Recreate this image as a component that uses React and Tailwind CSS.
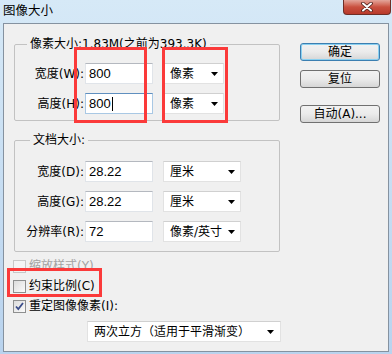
import React from 'react';

const UI = "font-['DejaVu_Sans','Noto_Sans_CJK_SC',sans-serif] text-[12px] text-black";
const NUM = "font-['Liberation_Sans','Noto_Sans_CJK_SC',sans-serif] text-[13px]";

function Caret() {
  return (
    <svg width="7" height="4" viewBox="0 0 7 4" className="shrink-0">
      <path d="M0 0h7L3.5 4z" fill="#000" />
    </svg>
  );
}

function TextBox({ value, focused }) {
  return (
    <div
      className={`ml-[1px] w-[68px] h-[21px] bg-white flex items-center pl-[3px] border ${NUM} ${
        focused
          ? 'border-[#a9c8e4] border-t-[#5f8fbf]'
          : 'border-[#e0e4e9] border-t-[#b4b8bf]'
      }`}
    >
      <span>{value}</span>
      {focused && <span className="w-px h-[14px] bg-black ml-[1px]" />}
    </div>
  );
}

function Combo({ label, w }) {
  return (
    <div className={`ml-[10px] ${w} h-[21px] bg-white border border-[#e2e2e2] border-t-[#d0d0d0] flex items-center justify-between pl-[6px] pr-[5px]`}>
      <span>{label}</span>
      <Caret />
    </div>
  );
}

function Row({ label, value, unit, w, focused }) {
  return (
    <div className="flex items-center h-[21px]">
      <div className="w-[69px] text-right whitespace-nowrap">{label}</div>
      <TextBox value={value} focused={focused} />
      <Combo label={unit} w={w} />
    </div>
  );
}

function Check({ checked, disabled, label }) {
  return (
    <div className="flex items-center h-[20px] ml-[-1px]">
      <div
        className={`w-[13px] h-[13px] border flex items-center justify-center bg-gradient-to-br ${
          disabled
            ? 'border-[#c8c8c8] from-[#f4f4f4] to-[#f4f4f4]'
            : 'border-[#8e8f8f] from-[#dcdcdc] to-[#fbfbfb]'
        }`}
      >
        {checked && (
          <svg width="9" height="9" viewBox="0 0 9 9">
            <path d="M1 4.5l2.3 2.6L8 1" fill="none" stroke="#3b4d8a" strokeWidth="1.8" />
          </svg>
        )}
      </div>
      <span className={`ml-[3px] ${disabled ? 'text-[#a3a3a3]' : ''}`}>{label}</span>
    </div>
  );
}

function Btn({ children, primary, className }) {
  return (
    <div
      className={`w-[80px] h-[18px] rounded-[3px] flex items-center justify-center bg-gradient-to-b from-[#f2f2f2] via-[#ebebeb] to-[#d6d6d6] ${
        primary ? 'border border-[#3c7fb1] shadow-[inset_0_0_0_1px_#8ad0f0]' : 'border border-[#707070]'
      } ${className || ''}`}
    >
      {children}
    </div>
  );
}

export default function App() {
  return (
    <div className={`relative w-[392px] h-[354px] overflow-hidden bg-gradient-to-b from-[#d6e9f7] to-[#b9d3ee] ${UI}`}>
      {/* title bar */}
      <div className="h-[23px] flex items-start">
        <div className="pl-[3px] pt-[4px] leading-[14px] text-[12.5px]">图像大小</div>
        <div className="ml-auto mr-[1px] w-[48px] h-[15px] rounded-b-[4px] border border-t-0 border-[#6e2e26] bg-gradient-to-b from-[#e3a59b] via-[#c9503f] to-[#b8392b] flex items-center justify-center">
          <svg width="12" height="10" viewBox="0 0 12 10">
            <path d="M2 1.5l8 7M10 1.5l-8 7" stroke="#4a1d18" strokeWidth="3.6" strokeLinecap="round" />
            <path d="M2 1.5l8 7M10 1.5l-8 7" stroke="#fff" strokeWidth="2" strokeLinecap="round" />
          </svg>
        </div>
      </div>

      {/* client area */}
      <div className="mx-[3px] h-[329px] bg-[#f0f0f0] border border-[#8592a0] flex">
        <div className="pl-[10px] pt-[12px] flex flex-col">
          <fieldset className="w-[266px] border border-[#c2c2c2] rounded-[2px] p-0 m-0">
            <legend className="ml-[12px] px-[3px] leading-[16px] whitespace-nowrap">像素大小:1.83M(之前为393.3K)</legend>
            <div className="pt-[11px] pb-[6px] flex flex-col gap-[9px]">
              <Row label="宽度(W):" value="800" unit="像素" w="w-[61px]" />
              <Row label="高度(H):" value="800" unit="像素" w="w-[61px]" focused />
            </div>
          </fieldset>

          <fieldset className="mt-[11px] w-[266px] border border-[#c2c2c2] rounded-[2px] p-0">
            <legend className="ml-[15px] px-[3px] leading-[16px]">文档大小:</legend>
            <div className="pt-[13px] pb-[9px] flex flex-col gap-[9px]">
              <Row label="宽度(D):" value="28.22" unit="厘米" w="w-[78px]" />
              <Row label="高度(G):" value="28.22" unit="厘米" w="w-[78px]" />
              <Row label="分辨率(R):" value="72" unit="像素/英寸" w="w-[78px]" />
            </div>
          </fieldset>

          <div className="mt-[4px] flex flex-col">
            <Check disabled label="缩放样式(Y)" />
            <Check label="约束比例(C)" />
            <Check checked label="重定图像像素(I):" />
          </div>

          <div className="mt-[5px] ml-[73px] w-[194px] h-[21px] bg-white border border-[#e2e2e2] border-t-[#d0d0d0] flex items-center justify-between pl-[6px] pr-[6px]">
            <span className="whitespace-nowrap">两次立方（适用于平滑渐变）</span>
            <Caret />
          </div>
        </div>

        <div className="ml-[19px] pt-[19px] flex flex-col">
          <Btn primary>确定</Btn>
          <Btn className="mt-[9px]">复位</Btn>
          <Btn className="mt-[17px]">自动(A)...</Btn>
        </div>
      </div>

      {/* red annotation boxes */}
      <div className="absolute left-[74px] top-[47px] w-[73px] h-[76px] border-[3px] border-[#fb3a3a]" />
      <div className="absolute left-[162px] top-[47px] w-[66px] h-[76px] border-[3px] border-[#fb3a3a]" />
      <div className="absolute left-[7px] top-[268px] w-[95px] h-[29px] border-[3px] border-[#fb3a3a]" />
    </div>
  );
}
